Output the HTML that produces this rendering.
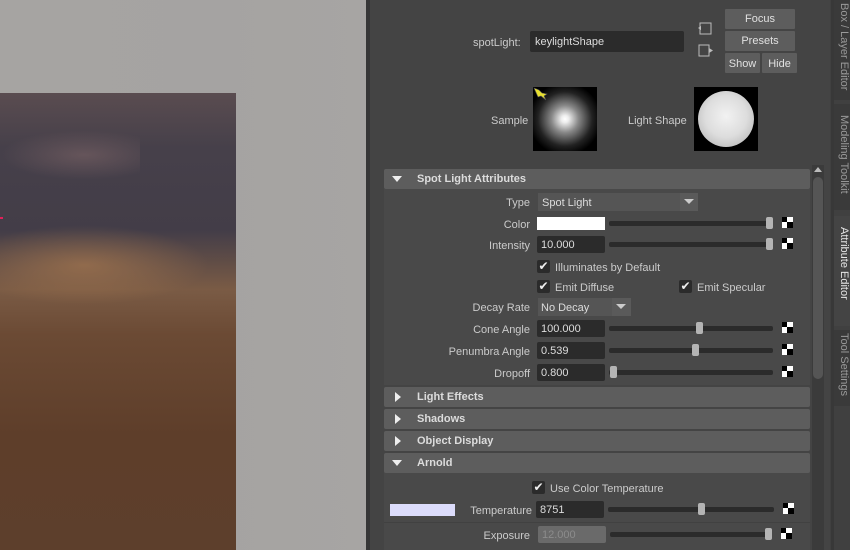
<!DOCTYPE html>
<html><head><meta charset="utf-8"><style>
*{margin:0;padding:0;box-sizing:border-box}
body{width:850px;height:550px;overflow:hidden;position:relative;background:#444;font-family:"Liberation Sans","DejaVu Sans",sans-serif;font-size:11px;color:#cbcbcb}
.a{position:absolute}
.lbl{position:absolute;text-align:right;width:160px;margin-top:1px}
.fld{position:absolute;background:#2b2b2b;height:17px;color:#ddd;padding:3px 0 0 4px;border-radius:2px}
.trk{position:absolute;height:5px;background:#2b2b2b;border-radius:2px}
.hdl{position:absolute;width:7px;height:12px;background:#b4b4b4;border-radius:2px}
.chk{position:absolute;width:11px;height:11px;background:
 linear-gradient(#000,#000) 0 0/5px 5px no-repeat,linear-gradient(#000,#000) 5px 5px/6px 6px no-repeat,#fff}
.sec{position:absolute;left:384px;width:426px;height:20px;background:#5d5d5d;border-radius:2px;font-weight:bold;color:#dcdcdc;padding:4px 0 0 33px}
.tri-r{position:absolute;left:11px;top:5px;width:0;height:0;border-left:6px solid #eee;border-top:5px solid transparent;border-bottom:5px solid transparent}
.tri-d{position:absolute;left:8px;top:7px;width:0;height:0;border-top:6px solid #eee;border-left:5px solid transparent;border-right:5px solid transparent}
.cb{position:absolute;width:13px;height:13px;background:#2b2b2b;border-radius:2px;color:#eee;font-size:12px;line-height:13px;text-align:center}
.cbt{position:absolute;margin-top:1px}
.btn{position:absolute;background:#5d5d5d;color:#e0e0e0;text-align:center;border-radius:1px}
.tab{position:absolute;left:834px;width:16px;background:#3a3a3a;color:#9a9a9a;writing-mode:vertical-rl;font-size:11px;padding-top:6px;white-space:nowrap;overflow:hidden}
</style></head><body>
<div class="a" style="left:0;top:0;width:366px;height:550px;background:linear-gradient(90deg,#a6a4a2,#a5a3a2 60%,#a7a5a3)"></div>
<div class="a" style="left:0;top:93px;width:236px;height:457px;background:linear-gradient(180deg,#5a4c50 0%,#46404a 12%,#433d48 30%,#7a5b45 43%,#6b4a34 53%,#5e3e2a 75%,#5d3f2c 100%)"></div>
<div class="a" style="left:0;top:130px;width:140px;height:50px;background:radial-gradient(ellipse at 60% 50%,rgba(140,110,110,.45),transparent 70%)"></div>
<div class="a" style="left:0;top:225px;width:210px;height:80px;background:radial-gradient(ellipse at 40% 50%,rgba(175,125,80,.6),transparent 70%)"></div>
<div class="a" style="left:0;top:217px;width:3px;height:2px;background:#e0205a"></div>
<div class="a" style="left:366px;top:0;width:4px;height:550px;background:#363636"></div>
<div class="a" style="left:370px;top:0;width:464px;height:550px;background:#444"></div>
<div class="a" style="left:473px;top:37px">spotLight:</div>
<div class="fld" style="left:530px;top:31px;width:154px;height:21px;padding:5px 0 0 5px">keylightShape</div>
<svg class="a" style="left:696px;top:21px" width="18" height="40"><path d="M4 2h11v11H4z M4 5v5" fill="none" stroke="#bbb" stroke-width="1"/><path d="M2 7l3-2v4z" fill="#bbb"/><path d="M3 24h10v11H3z" fill="none" stroke="#bbb"/><path d="M13 27l4 2.5-4 2.5z" fill="#bbb"/></svg>
<div class="btn" style="left:725px;top:9px;width:70px;height:20px;padding-top:4px">Focus</div>
<div class="btn" style="left:725px;top:31px;width:70px;height:20px;padding-top:4px">Presets</div>
<div class="btn" style="left:725px;top:53px;width:35px;height:20px;padding-top:5px">Show</div>
<div class="btn" style="left:762px;top:53px;width:35px;height:20px;padding-top:5px">Hide</div>
<div class="a" style="left:491px;top:115px">Sample</div>
<div class="a" style="left:533px;top:87px;width:64px;height:64px;background:radial-gradient(circle at 50% 50%,#fff 0,#eee 8%,#888 30%,#222 60%,#000 80%)"></div>
<svg class="a" style="left:532px;top:86px" width="18" height="16"><path d="M2 2l5 2 3 3 5 1-3 2 2 4-5-4-3 1z" fill="#e8e030" stroke="#555" stroke-width=".6"/></svg>
<div class="a" style="left:628px;top:115px">Light Shape</div>
<div class="a" style="left:694px;top:87px;width:64px;height:64px;background:#000"></div>
<div class="a" style="left:698px;top:91px;width:56px;height:56px;border-radius:50%;background:radial-gradient(circle at 50% 45%,#f2f2f2,#ddd 50%,#aaa 100%)"></div>
<div class="a" style="left:812px;top:165px;width:12px;height:385px;background:#3b3b3b"></div>
<div class="a" style="left:814px;top:167px;width:0;height:0;border-bottom:5px solid #bbb;border-left:4px solid transparent;border-right:4px solid transparent"></div>
<div class="a" style="left:813px;top:177px;width:10px;height:202px;background:#555;border-radius:5px"></div>
<div class="a" style="left:384px;top:189px;width:426px;height:196px;background:#494949"></div>
<div class="a" style="left:384px;top:472px;width:426px;height:78px;background:#494949"></div>
<div class="sec" style="top:169px"><div class="tri-d"></div>Spot Light Attributes</div>
<div class="lbl" style="left:370px;top:196px">Type</div>
<div class="a" style="left:538px;top:193px;width:142px;height:18px;background:#555;padding:4px 0 0 4px;color:#ddd">Spot Light</div>
<div class="a" style="left:680px;top:193px;width:18px;height:18px;background:#5a5a5a"></div>
<div class="a" style="left:684px;top:199px;border-top:5px solid #ccc;border-left:5px solid transparent;border-right:5px solid transparent"></div>
<div class="lbl" style="left:370px;top:218px">Color</div>
<div class="a" style="left:537px;top:217px;width:68px;height:13px;background:#fff"></div>
<div class="trk" style="left:609px;top:221px;width:164px"></div><div class="hdl" style="left:766px;top:217px"></div><div class="chk" style="left:782px;top:217px"></div>
<div class="lbl" style="left:370px;top:239px">Intensity</div>
<div class="fld" style="left:537px;top:236px;width:68px">10.000</div>
<div class="trk" style="left:609px;top:242px;width:164px"></div><div class="hdl" style="left:766px;top:238px"></div><div class="chk" style="left:782px;top:238px"></div>
<div class="cb" style="left:537px;top:260px">✔</div><div class="cbt" style="left:555px;top:261px">Illuminates by Default</div>
<div class="cb" style="left:537px;top:280px">✔</div><div class="cbt" style="left:555px;top:281px">Emit Diffuse</div>
<div class="cb" style="left:679px;top:280px">✔</div><div class="cbt" style="left:697px;top:281px">Emit Specular</div>
<div class="lbl" style="left:370px;top:301px">Decay Rate</div>
<div class="a" style="left:538px;top:298px;width:74px;height:18px;background:#555;padding:4px 0 0 3px;color:#ddd">No Decay</div>
<div class="a" style="left:612px;top:298px;width:19px;height:18px;background:#5a5a5a"></div>
<div class="a" style="left:616px;top:304px;border-top:5px solid #ccc;border-left:5px solid transparent;border-right:5px solid transparent"></div>
<div class="lbl" style="left:370px;top:323px">Cone Angle</div>
<div class="fld" style="left:537px;top:320px;width:68px">100.000</div>
<div class="trk" style="left:609px;top:326px;width:164px"></div><div class="hdl" style="left:696px;top:322px"></div><div class="chk" style="left:782px;top:322px"></div>
<div class="lbl" style="left:370px;top:345px">Penumbra Angle</div>
<div class="fld" style="left:537px;top:342px;width:68px">0.539</div>
<div class="trk" style="left:609px;top:348px;width:164px"></div><div class="hdl" style="left:692px;top:344px"></div><div class="chk" style="left:782px;top:344px"></div>
<div class="lbl" style="left:370px;top:367px">Dropoff</div>
<div class="fld" style="left:537px;top:364px;width:68px">0.800</div>
<div class="trk" style="left:609px;top:370px;width:164px"></div><div class="hdl" style="left:610px;top:366px"></div><div class="chk" style="left:782px;top:366px"></div>
<div class="sec" style="top:387px"><div class="tri-r"></div>Light Effects</div>
<div class="sec" style="top:409px"><div class="tri-r"></div>Shadows</div>
<div class="sec" style="top:431px"><div class="tri-r"></div>Object Display</div>
<div class="sec" style="top:453px"><div class="tri-d"></div>Arnold</div>
<div class="cb" style="left:532px;top:481px">✔</div><div class="cbt" style="left:550px;top:482px">Use Color Temperature</div>
<div class="a" style="left:390px;top:504px;width:65px;height:12px;background:#dcdcfb"></div>
<div class="lbl" style="left:372px;top:504px">Temperature</div>
<div class="fld" style="left:536px;top:501px;width:68px">8751</div>
<div class="trk" style="left:608px;top:507px;width:166px"></div><div class="hdl" style="left:698px;top:503px"></div><div class="chk" style="left:783px;top:503px"></div>
<div class="a" style="left:384px;top:522px;width:426px;height:1px;background:#414141"></div>
<div class="lbl" style="left:370px;top:529px">Exposure</div>
<div class="a" style="left:538px;top:526px;width:68px;height:17px;background:#6a6a6a;color:#8c8c8c;padding:3px 0 0 4px;border-radius:2px">12.000</div>
<div class="trk" style="left:610px;top:532px;width:162px"></div><div class="hdl" style="left:765px;top:528px"></div><div class="chk" style="left:781px;top:528px"></div>
<div class="a" style="left:830px;top:0;width:20px;height:550px;background:#404040"></div>
<div class="a" style="left:831px;top:0;width:3px;height:550px;background:#383838"></div>
<div class="tab" style="top:0;height:100px;padding-top:3px">Box / Layer Editor</div>
<div class="tab" style="top:104px;height:106px;padding-top:11px">Modeling Toolkit</div>
<div class="tab" style="top:216px;height:110px;padding-top:11px;background:#444;color:#e6e6e6">Attribute Editor</div>
<div class="tab" style="top:330px;height:76px;padding-top:3px">Tool Settings</div>
</body></html>
